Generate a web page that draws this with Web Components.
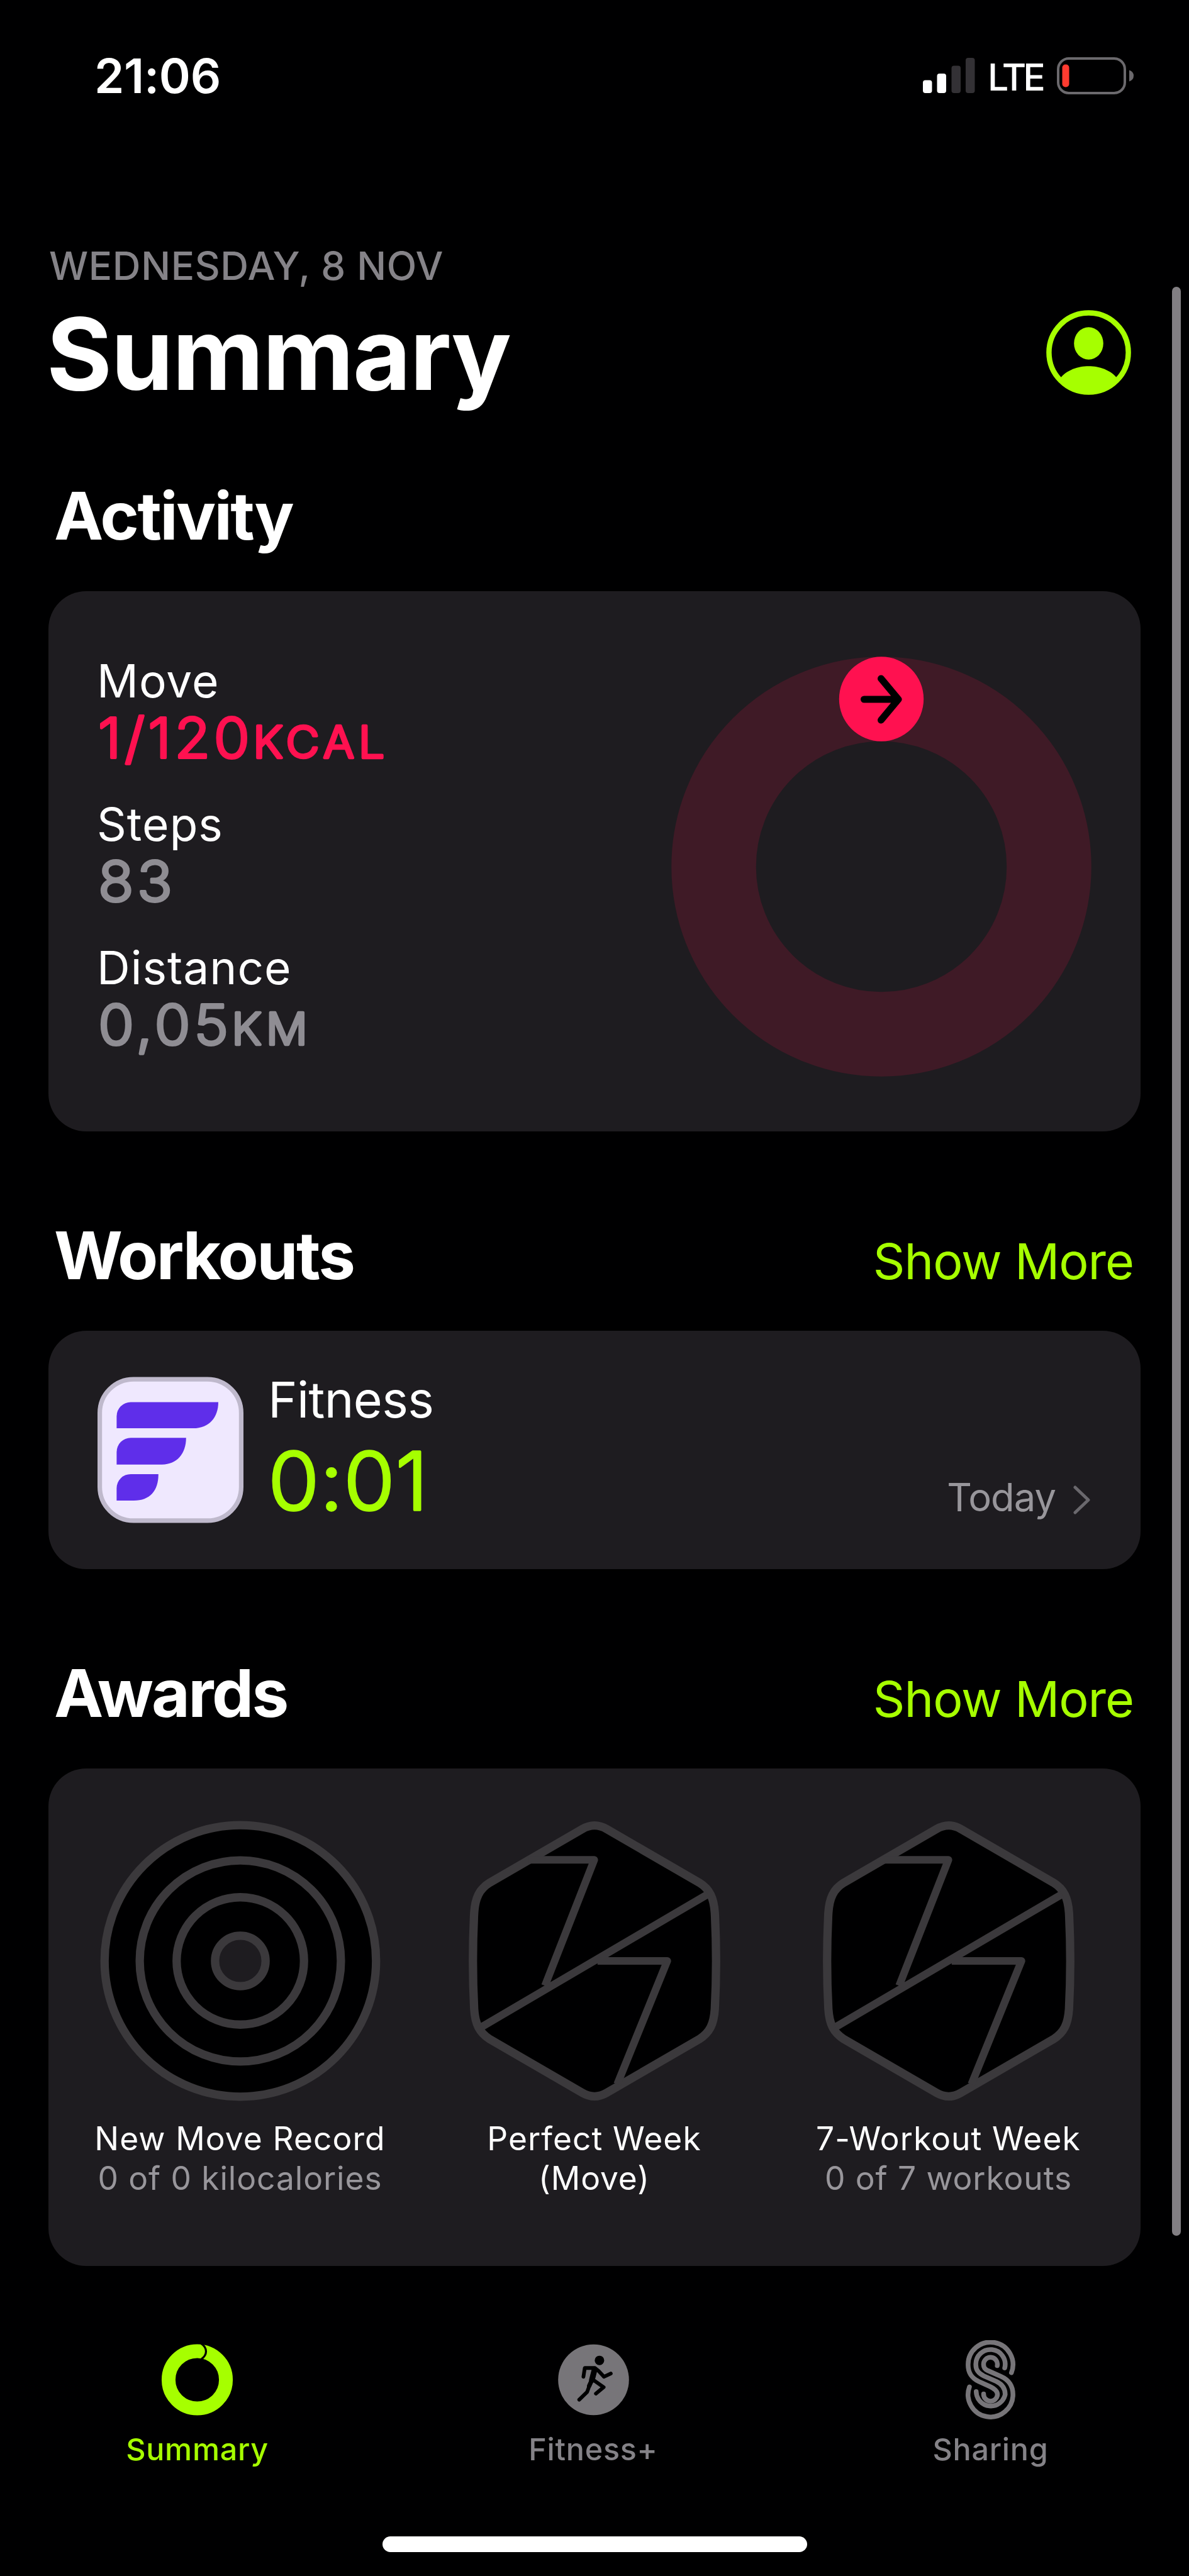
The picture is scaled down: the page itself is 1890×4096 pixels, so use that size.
<!DOCTYPE html>
<html lang="en">
<head>
<meta charset="utf-8">
<title>Summary</title>
<style>
  html, body { margin: 0; background: #000001; }
  body {
    font-family: Inter, "Liberation Sans", sans-serif;
    color: #fff;
    --green: #a6ff00;
    --pink: #ff1150;
    --card: #1e1c20;
    --line: #3b393c;
    --muted: #98969b;
  }
</style>
</head>
<body>
<fitness-app></fitness-app>

<script>
// Base class: every component renders its template once
class BaseElement extends HTMLElement {
  constructor() {
    super();
    this.attachShadow({ mode: 'open' });
  }

  connectedCallback() {
    this.shadowRoot.innerHTML = this.template();
  }

  attr(name) {
    return this.getAttribute(name) || '';
  }
}

// Status bar
class StatusBar extends BaseElement {
  template() {
    return `
      <style>
        :host {
          display: flex;
          align-items: center;
          justify-content: space-between;
          height: 240px;
          padding: 0 87px 0 150px;
        }
        .time { font-size: 76px; font-weight: 600; letter-spacing: -0.004em; }
        .right { display: flex; align-items: center; }
        .lte {
          font-size: 59px;
          font-weight: 500;
          letter-spacing: -0.085em;
          margin: 5px 23px 0 20px;
          width: 87px;
        }
        svg { display: block; }
      </style>
      <span class="time">21:06</span>
      <div class="right">
        <svg width="83" height="56" viewBox="0 0 83 56">
          <rect x="0" y="35.500" width="14.500" height="20.500" rx="4" fill="#fff"/>
          <rect x="22.500" y="25" width="14.500" height="31" rx="4" fill="#fff"/>
          <rect x="45.500" y="12.500" width="14.500" height="43.500" rx="4" fill="#333135"/>
          <rect x="68" y="0" width="14.500" height="56" rx="4" fill="#333135"/>
        </svg>
        <span class="lte">LTE</span>
        <svg width="123" height="59" viewBox="0 0 123 59">
          <rect x="2" y="2" width="106" height="55" rx="17" fill="none" stroke="#6b696d" stroke-width="4"/>
          <path d="M115 20.500q7 2.500 7 9t-7 9z" fill="#6b696d"/>
          <rect x="8.500" y="11.500" width="11" height="36" rx="5" fill="#ff3b30"/>
        </svg>
      </div>
    `;
  }
}
customElements.define('status-bar', StatusBar);

// Date, page title and avatar
class PageHeader extends BaseElement {
  template() {
    return `
      <style>
        :host { display: block; padding: 145px 92px 0 78px; }
        .date {
          font-size: 62px;
          line-height: 76px;
          font-weight: 500;
          letter-spacing: 0.010em;
          color: #858388;
        }
        .row { display: flex; align-items: center; justify-content: space-between; margin-top: 6px; }
        h1 {
          margin: 0 0 0 -4px;
          font-size: 159px;
          line-height: 190px;
          font-weight: 700;
          letter-spacing: -0.010em;
        }
        svg { display: block; margin-bottom: 3px; }
      </style>
      <div class="date"><slot name="date"></slot></div>
      <div class="row">
        <h1><slot></slot></h1>
        <svg width="135" height="135" viewBox="-84 -84 168 168" fill="#a6ff00">
          <circle r="78.500" fill="none" stroke="#a6ff00" stroke-width="10.500"/>
          <ellipse cx="0" cy="-18" rx="29" ry="32"/>
          <path d="M-57 52C-44 34-20 27 0 27S44 34 57 52A78 78 0 0 1-57 52Z"/>
        </svg>
      </div>
    `;
  }
}
customElements.define('page-header', PageHeader);

// Section: heading row plus a card
class AppSection extends BaseElement {
  template() {
    return `
      <style>
        :host { display: block; padding: 0 77px; }
        header {
          display: flex;
          align-items: baseline;
          justify-content: space-between;
          height: 126px;
          padding: 0 11px 0 9px;
        }
        h2 { margin: 0; font-size: 105px; line-height: 126px; font-weight: 700; letter-spacing: -0.025em; }
        a { font-size: 79px; line-height: 96px; letter-spacing: -0.013em; color: var(--green); }
        .card {
          box-sizing: border-box;
          height: var(--card-height);
          margin-top: 57px;
          border-radius: 60px;
          background: var(--card);
          overflow: hidden;
        }
      </style>
      <header>
        <h2>${this.attr('heading')}</h2>
        ${this.hasAttribute('more') ? `<a>${this.attr('more')}</a>` : ''}
      </header>
      <div class="card"><slot></slot></div>
    `;
  }
}
customElements.define('app-section', AppSection);

// Number with rounded stroke ends, the unit is set smaller
class RoundedText extends BaseElement {
  template() {
    return `
      <style>
        :host { display: block; }
        svg { display: block; overflow: visible; }
        text {
          font-family: Inter, "Liberation Sans", sans-serif;
          font-weight: 300;
          fill: currentColor;
          stroke: currentColor;
          stroke-linejoin: round;
          font-size: var(--size, 88px);
          stroke-width: var(--stroke, 4px);
          letter-spacing: var(--spacing, 0.06em);
          transform: scaleX(var(--stretch, 1.05));
        }
        .unit { font-size: 69.500px; letter-spacing: 0.1em; stroke-width: 4.500px; }
      </style>
      <svg width="${this.attr('width')}" height="${this.attr('height')}">
        <text x="0" y="${this.attr('baseline')}">${this.attr('value')}<tspan class="unit">${this.attr('unit')}</tspan></text>
      </svg>
    `;
  }
}
customElements.define('rounded-text', RoundedText);

// Label with its value below
class ActivityStat extends BaseElement {
  template() {
    return `
      <style>
        :host { display: block; height: 179px; }
        .label { font-size: 73px; line-height: 90px; letter-spacing: 0.014em; }
        rounded-text { color: var(--stat-color, #8f8d93); margin-left: 2px; }
      </style>
      <div class="label">${this.attr('label')}</div>
      <rounded-text value="${this.attr('value')}" unit="${this.attr('unit')}" width="500" height="89" baseline="77"></rounded-text>
    `;
  }
}
customElements.define('activity-stat', ActivityStat);

// Move ring
class ActivityRing extends BaseElement {
  template() {
    return `
      <style>
        :host { display: block; }
        svg { display: block; }
      </style>
      <svg width="668" height="668" viewBox="-334 -334 668 668">
        <circle r="266.500" fill="none" stroke="#3f1a26" stroke-width="134.500"/>
        <circle cy="-266.500" r="67.200" fill="#ff1150"/>
        <path d="M-27.500-266H26M-.500-299 27-266-.500-233" fill="none" stroke="#000" stroke-width="11" stroke-linecap="round" stroke-linejoin="round"/>
      </svg>
    `;
  }
}
customElements.define('activity-ring', ActivityRing);

class ActivitySummary extends BaseElement {
  template() {
    return `
      <style>
        :host { display: flex; justify-content: space-between; padding: 98px 78px 0 77px; }
        .stats { display: flex; flex-direction: column; gap: 49px; }
        activity-ring { margin-top: 6px; }
      </style>
      <div class="stats"><slot></slot></div>
      <activity-ring></activity-ring>
    `;
  }
}
customElements.define('activity-summary', ActivitySummary);

// Workout row
class WorkoutItem extends BaseElement {
  template() {
    return `
      <style>
        :host { display: flex; padding: 61px 80px 0 78px; }
        .icon { display: block; margin-top: 12px; }
        .info { flex: 1; margin-left: 39px; }
        .name { font-size: 79px; line-height: 96px; letter-spacing: -0.008em; }
        rounded-text { color: var(--green); --size: 128px; --stroke: 3.5px; --spacing: 0.006em; --stretch: 1.03; }
        .when { display: flex; align-items: center; height: 74px; margin-top: 167px; gap: 28px; }
        .when span { font-size: 61.500px; line-height: 74px; letter-spacing: -0.016em; color: var(--muted); }
        .when svg { margin-top: 7px; }
      </style>
      <svg class="icon" width="232" height="233" viewBox="0 0 290 290">
        <rect x="4.500" y="4.500" width="281" height="281" rx="67" fill="#efe8fe" stroke="#bfb9cc" stroke-width="9"/>
        <g fill="#5f2eea">
          <path d="M66 50H240C240 80 222 102 190 102H38V78A28 28 0 0 1 66 50Z"/>
          <path d="M66 121H176C176 152 158 174 128 174H38V149A28 28 0 0 1 66 121Z"/>
          <path d="M66 193H121C121 226 104 245.500 72 245.500H38V221A28 28 0 0 1 66 193Z"/>
        </g>
      </svg>
      <div class="info">
        <div class="name">${this.attr('name')}</div>
        <rounded-text value="${this.attr('duration')}" width="400" height="163" baseline="128.500"></rounded-text>
      </div>
      <div class="when">
        <span>${this.attr('when')}</span>
        <svg width="27" height="46" viewBox="0 0 27 46">
          <path d="M3 3 24 23 3 43" fill="none" stroke="#6a686d" stroke-width="5" stroke-linecap="round" stroke-linejoin="round"/>
        </svg>
      </div>
    `;
  }
}
customElements.define('workout-item', WorkoutItem);

// Award medals
const medals = {
  record: `
    <circle r="268.500" fill="#000001"/>
    <circle r="50" fill="#1e1c20"/>
    <g fill="none" stroke="#3b393c" stroke-width="16.500">
      <circle r="268.500"/><circle r="199"/><circle r="126"/><circle r="50"/>
    </g>`,
  week: `
    <g fill="none" stroke="#3b393c" stroke-width="16.500" stroke-linejoin="round">
      <path fill="#000001" d="M-24-261Q0-275 24-261L207-155C228-142 236-125 238-95Q243 0 238 95C236 125 228 142 207 155L24 261Q0 275-24 261L-207 155C-228 142-236 125-238 95Q-243 0-238-95C-236-125-228-142-207-155Z"/>
      <path stroke-width="15" d="M-130-200H-.500L-98 49M-224 131 224-132M6 0H144L45 244"/>
    </g>`
};

class AwardBadge extends BaseElement {
  template() {
    return `
      <style>
        :host {
          display: flex;
          flex-direction: column;
          align-items: center;
          font-size: 51.500px;
          line-height: 63px;
          letter-spacing: 0.021em;
          text-align: center;
        }
        svg { display: block; margin-bottom: 26px; }
        .detail { color: #98969b; letter-spacing: 0.018em; }
        .detail.plain { color: #fff; }
      </style>
      <svg width="450" height="450" viewBox="-280 -280 560 560">${medals[this.attr('medal')]}</svg>
      <div>${this.attr('name')}</div>
      <div class="detail ${this.hasAttribute('plain') ? 'plain' : ''}">${this.attr('detail')}</div>
    `;
  }
}
customElements.define('award-badge', AwardBadge);

class AwardList extends BaseElement {
  template() {
    return `
      <style>
        :host { display: grid; grid-template-columns: repeat(3, 563px); padding: 81px 0 0 23px; }
      </style>
      <slot></slot>
    `;
  }
}
customElements.define('award-list', AwardList);

// Tab bar
const tabIcons = {
  // the ring has a thin rounded seam right of the top
  summary: `
    <circle r="170" fill="none" stroke="#a6ff00" stroke-width="82"/>
    <path d="M22-216C42-203 52-186 52-168S42-135 24-122" fill="none" stroke="#000001" stroke-width="12"/>`,
  fitness: `
    <circle r="210" fill="#777579"/>
    <circle cx="35" cy="-115" r="28" fill="#000001"/>
    <g fill="none" stroke="#000001" stroke-linecap="round" stroke-linejoin="round">
      <path stroke-width="22" d="M-60-18-52-70H8L30-52 62-18 102-37M6 6 60 44 14 82M-20 22-38 72-85 118"/>
      <path stroke-width="34" d="M6-60-10 2"/>
      <path stroke-width="26" d="M-10 2-26 36"/>
    </g>`,
  sharing: `
    <g transform="translate(-240 -300)" fill="none" stroke="#777579" stroke-width="28" stroke-linecap="round">
      <path d="M364 258A133 133 0 1 0 107 212C107 262 130 290 170 310L235 339C265 353 281 366 281 387A41 41 0 1 1 199 384"/>
      <path d="M324 230A87 87 0 1 0 153 212C153 245 170 262 200 277L275 310C308 326 327 350 327 387A87 87 0 0 1 155 370"/>
      <path d="M280 216A41 41 0 1 0 199 212C199 228 208 238 225 246L300 279C350 301 373 337 373 387A133 133 0 1 1 115 342"/>
    </g>`
};

class TabItem extends BaseElement {
  template() {
    return `
      <style>
        :host {
          display: flex;
          flex-direction: column;
          align-items: center;
          gap: 18px;
          color: #848287;
          font-size: 48.500px;
          line-height: 60px;
          font-weight: 500;
          letter-spacing: 0.015em;
        }
        :host([active]) { color: var(--green); }
        svg { display: block; }
      </style>
      <svg width="129" height="126" viewBox="-240 -235 480 470">${tabIcons[this.attr('icon')]}</svg>
      <span>${this.attr('label')}</span>
    `;
  }
}
customElements.define('tab-item', TabItem);

class TabBar extends BaseElement {
  template() {
    return `
      <style>
        :host { display: grid; grid-template-columns: 627px 632px 631px; padding-top: 118px; }
      </style>
      <slot></slot>
    `;
  }
}
customElements.define('tab-bar', TabBar);

// Whole screen
class FitnessApp extends BaseElement {
  template() {
    return `
      <style>
        :host { display: block; position: relative; width: 1890px; height: 4096px; overflow: hidden; }
        page-header { margin-bottom: 100px; }
        .activity { --card-height: 859px; }
        .workouts { --card-height: 379px; margin-top: 134px; }
        .awards { --card-height: 791px; margin-top: 134px; }
        .scrollbar {
          position: absolute;
          right: 13px;
          top: 456px;
          width: 14.500px;
          height: 3099px;
          border-radius: 8px;
          background: #827f83;
        }
        .home { width: 675px; height: 25px; margin: 108px auto 0; border-radius: 12.500px; background: #fff; }
      </style>
      <status-bar></status-bar>
      <page-header><span slot="date">WEDNESDAY, 8 NOV</span>Summary</page-header>
      <app-section class="activity" heading="Activity">
        <activity-summary>
          <activity-stat label="Move" value="1/120" unit="KCAL" style="--stat-color: var(--pink)"></activity-stat>
          <activity-stat label="Steps" value="83"></activity-stat>
          <activity-stat label="Distance" value="0,05" unit="KM"></activity-stat>
        </activity-summary>
      </app-section>
      <app-section class="workouts" heading="Workouts" more="Show More">
        <workout-item name="Fitness" duration="0:01" when="Today"></workout-item>
      </app-section>
      <app-section class="awards" heading="Awards" more="Show More">
        <award-list>
          <award-badge medal="record" name="New Move Record" detail="0 of 0 kilocalories"></award-badge>
          <award-badge medal="week" name="Perfect Week" detail="(Move)" plain></award-badge>
          <award-badge medal="week" name="7-Workout Week" detail="0 of 7 workouts"></award-badge>
        </award-list>
      </app-section>
      <tab-bar>
        <tab-item icon="summary" label="Summary" active></tab-item>
        <tab-item icon="fitness" label="Fitness+"></tab-item>
        <tab-item icon="sharing" label="Sharing"></tab-item>
      </tab-bar>
      <div class="home"></div>
      <div class="scrollbar"></div>
    `;
  }
}
customElements.define('fitness-app', FitnessApp);
</script>
</body>
</html>
